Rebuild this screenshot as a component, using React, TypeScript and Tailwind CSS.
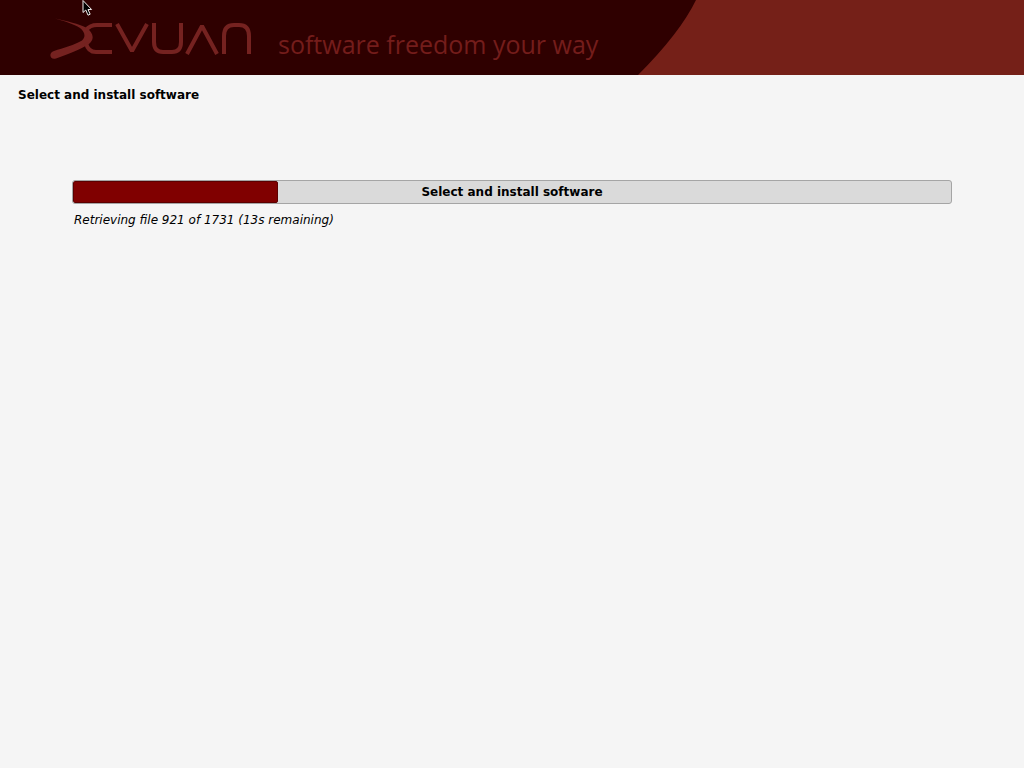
const progress = { title: "Select and install software", percent: 23.4, detail: "Retrieving file 921 of 1731 (13s remaining)" };

function Logo() {
  return (
    <svg role="img" aria-label="Devuan" viewBox="0 0 204 44" className="h-11 w-[204px] shrink-0" fill="none" stroke="#752220" strokeWidth="4">
      <path
        d="M5 2.5C17 5 29 8 36 11.5C44 17 45 24 38 28.5C31 33 19 38 6 42.5C0 44.500 -2 37 4 35C13 32 25 29 32 24.500C36 21 35 16 30 12C24 8 14 5 5 2.5Z"
        fill="#752220"
        stroke="none"
      />
      <path d="M62 9H47Q40 9 36 14" />
      <path d="M36 27Q38 36 46 36H62" />
      <path d="M67 8L82 35L97 8" strokeLinejoin="bevel" />
      <path d="M104 7V26Q104 36 113 36H122Q131 36 131 26V7" />
      <path d="M137 38L152 10L167 38" strokeLinejoin="bevel" />
      <path d="M174 38V20Q174 9 184 9H189Q199 9 199 20V38" />
    </svg>
  );
}

function Pointer() {
  return (
    <svg aria-hidden="true" viewBox="0 0 12 18" className="absolute top-0 left-[82px] h-[18px] w-3" fill="#000" stroke="#f1ecec" strokeWidth="1">
      <path d="M1 .5V12.5L3.8 10L6 15.2L8.2 14.2L6 9.5H9.6Z" />
    </svg>
  );
}

function Banner() {
  return (
    <header className="relative flex h-[75px] items-start overflow-hidden bg-[#2f0000] pt-4 pl-[50px]">
      <svg aria-hidden="true" viewBox="0 0 386 75" preserveAspectRatio="none" className="absolute inset-y-0 right-0 left-[638px] h-full w-[calc(100%-638px)]">
        <path d="M58 0Q42 33 0 75H386V0Z" fill="#752018" />
      </svg>
      <Logo />
      <p className="relative ml-6 pt-2.5 font-['Open_Sans',sans-serif] text-[25px] leading-9 font-normal whitespace-nowrap text-[#741d1b]">
        software freedom your way
      </p>
      <Pointer />
    </header>
  );
}

export default function App() {
  return (
    <div className="min-h-screen bg-[#f5f5f5] font-['DejaVu_Sans',sans-serif] text-xs leading-4 text-black">
      <Banner />
      <main>
        <h1 className="px-[18px] pt-3 font-bold">{progress.title}</h1>
        <section className="px-[72px] pt-[77px]">
          <div
            role="progressbar"
            aria-label={progress.title}
            aria-valuenow={progress.percent}
            aria-valuemin={0}
            aria-valuemax={100}
            className="relative h-6 overflow-hidden rounded-[3px] border border-[#a5a5a5] bg-[#dadada]"
          >
            <div className="h-full rounded-xs border border-[#5c0000] bg-[#800000]" style={{ width: `${progress.percent}%` }} />
            <span className="absolute inset-0 flex items-center justify-center font-bold">{progress.title}</span>
          </div>
          <p className="px-0.5 pt-2 italic">{progress.detail}</p>
        </section>
      </main>
    </div>
  );
}
